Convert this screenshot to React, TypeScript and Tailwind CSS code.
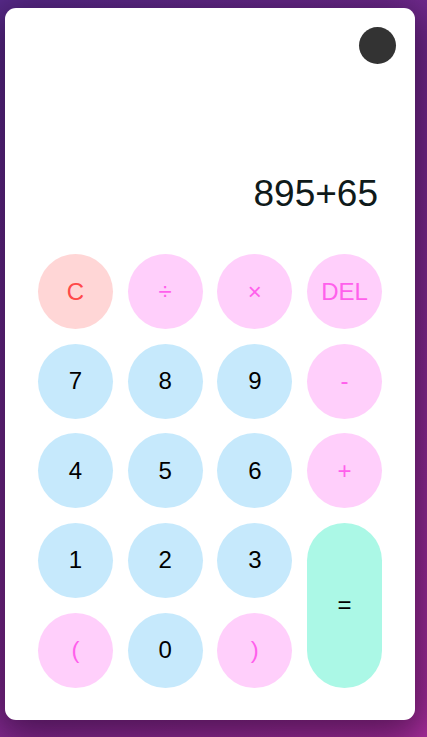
import React from "react";

type Btn = { label: string; kind: "clear" | "op" | "num" | "eq" };

const rows: Btn[] = [
  { label: "C", kind: "clear" },
  { label: "÷", kind: "op" },
  { label: "×", kind: "op" },
  { label: "DEL", kind: "op" },
  { label: "7", kind: "num" },
  { label: "8", kind: "num" },
  { label: "9", kind: "num" },
  { label: "-", kind: "op" },
  { label: "4", kind: "num" },
  { label: "5", kind: "num" },
  { label: "6", kind: "num" },
  { label: "+", kind: "op" },
  { label: "1", kind: "num" },
  { label: "2", kind: "num" },
  { label: "3", kind: "num" },
  { label: "=", kind: "eq" },
  { label: "(", kind: "op" },
  { label: "0", kind: "num" },
  { label: ")", kind: "op" },
];

function cls(kind: Btn["kind"]) {
  switch (kind) {
    case "clear":
      return "bg-[#ffd6d6] text-[#ff4a4a]";
    case "op":
      return "bg-[#ffcffb] text-[#ff60ec]";
    case "num":
      return "bg-[#c6e9fc] text-black";
    case "eq":
      return "bg-[#abf8e6] text-black row-span-2 h-full";
  }
}

export default function App() {
  return (
    <div className="min-h-[737px] w-full bg-[linear-gradient(135deg,#5a2c8e_0%,#7d2b92_50%,#b030a2_100%)] pt-[8px] pl-[5px] pb-[17px] font-['Liberation_Sans',Arial,sans-serif]">
      <div className="w-[410px] h-[712px] bg-white rounded-[11px] shadow-[0_10px_40px_10px_rgba(20,0,30,0.55)] flex flex-col">
        <div className="flex justify-end mt-[19px] mr-[19px]">
          <div className="w-[37px] h-[37px] rounded-full bg-[#333333]" />
        </div>
        <div className="mt-[110px] pr-[37px] text-right text-[37px] leading-[40px] text-[#0f1a1a]">
          895+65
        </div>
        <div className="mt-[40px] px-[33px] grid grid-cols-4 auto-rows-[75px] gap-[14.67px]">
          {rows.map((b, i) => (
            <div
              key={i}
              className={`${cls(b.kind)} w-[75px] ${b.kind === "eq" ? "" : "h-[75px]"} rounded-full flex items-center justify-center text-[24px]`}
            >
              {b.label}
            </div>
          ))}
        </div>
      </div>
    </div>
  );
}
